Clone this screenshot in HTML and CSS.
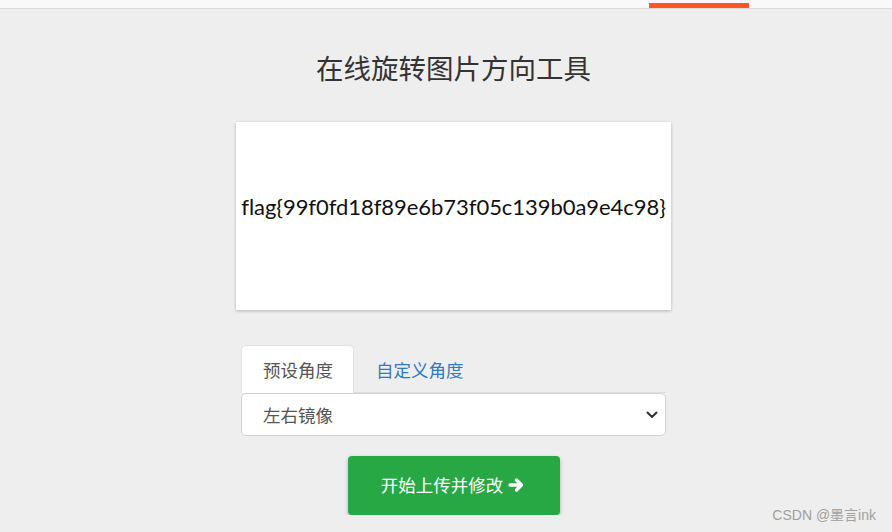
FILE: index.html
```html
<!DOCTYPE html>
<html lang="zh-CN">
<head>
    <meta charset="UTF-8">
    <meta name="viewport" content="width=device-width, initial-scale=1.0">
    <title>在线旋转图片方向工具</title>
    <link rel="stylesheet" href="styles.css">
</head>
<body>
    <div class="topbar">
        <span class="topbar-active"></span>
    </div>

    <div class="main">
        <h1 class="title">在线旋转图片方向工具</h1>

        <div class="preview">
            <span class="preview-text">flag{99f0fd18f89e6b73f05c139b0a9e4c98}</span>
        </div>

        <div class="form">
            <ul class="tabs">
                <li class="tab active">预设角度</li>
                <li class="tab">自定义角度</li>
            </ul>
            <div class="select">
                <span>左右镜像</span>
                <svg class="chevron" width="12" height="8" viewBox="0 0 12 8">
                    <path d="M1.5 1.5 L6 6 L10.5 1.5" fill="none" stroke="#333" stroke-width="2" stroke-linecap="round" stroke-linejoin="round"/>
                </svg>
            </div>
        </div>

        <button class="submit">开始上传并修改
            <svg class="arrow" width="16" height="16" viewBox="0 0 16 16">
                <path d="M2 8 H13 M8.5 3 L13.5 8 L8.5 13" fill="none" stroke="#fff" stroke-width="3.4" stroke-linecap="round" stroke-linejoin="round"/>
            </svg>
        </button>
    </div>

    <div class="watermark">CSDN @墨言ink</div>
</body>
</html>
```

FILE: styles.css
```css
body {
    margin: 0;
    padding: 0;
    background-color: #eeeeee;
    font-family: "Noto Sans CJK SC", "Noto Sans", sans-serif;
    color: #333;
}
.topbar {
    height: 8px;
    background-color: #f9f9f9;
    border-bottom: 1px solid #dadada;
    display: flex;
    align-items: flex-end;
    padding-left: 649px;
}
.topbar-active {
    width: 100px;
    height: 5px;
    background-color: #ff5722;
}
.main {
    display: flex;
    flex-direction: column;
    align-items: center;
    padding-left: 15px;
}
.title {
    margin: 43px 0 0;
    font-size: 27.5px;
    font-weight: 400;
    line-height: 30px;
    color: #333;
}
.preview {
    margin-top: 40px;
    width: 435px;
    height: 168px;
    padding-bottom: 20px;
    background: #fff;
    box-shadow: 0 1px 3px rgba(0, 0, 0, 0.25);
    display: flex;
    align-items: center;
    justify-content: center;
}
.preview-text {
    font-family: Lato, "Open Sans", sans-serif;
    font-size: 22px;
    color: #111;
    letter-spacing: -0.05px;
}
.form {
    margin-top: 35px;
    width: 425px;
}
.tabs {
    list-style: none;
    margin: 0;
    padding: 0;
    display: flex;
    border-bottom: 1px solid #dddddd;
}
.tab {
    height: 46px;
    padding: 0 20px 0 21px;
    display: flex;
    align-items: center;
    font-size: 17.5px;
    color: #337ab7;
    border: 1px solid transparent;
    border-bottom: none;
    border-radius: 5px 5px 0 0;
    margin-bottom: -1px;
}
.tab.active {
    background: #fff;
    color: #555;
    border-color: #e2e2e2;
    height: 47px;
}
.select {
    height: 41px;
    background: #fff;
    border: 1px solid #cfd3d8;
    border-radius: 5px;
    display: flex;
    align-items: center;
    justify-content: space-between;
    padding: 0 7px 0 21px;
    font-size: 17.5px;
    color: #555;
}
.chevron {
    display: block;
}
.submit {
    margin-top: 20px;
    width: 212px;
    height: 59px;
    background-color: #28a745;
    border: none;
    border-radius: 4px;
    box-shadow: 0 2px 4px rgba(0, 0, 0, 0.25);
    color: #fff;
    font-family: "Noto Sans CJK SC", "Noto Sans", sans-serif;
    font-size: 17.5px;
    display: flex;
    align-items: center;
    justify-content: center;
    gap: 5px;
    padding: 0 2px 3px 0;
}
.arrow {
    display: block;
    margin-top: 2px;
}
.watermark {
    position: absolute;
    right: 16px;
    bottom: 8px;
    font-family: "Liberation Sans", "Noto Sans CJK SC", sans-serif;
    font-size: 14px;
    color: #a0a0a0;
}
```
